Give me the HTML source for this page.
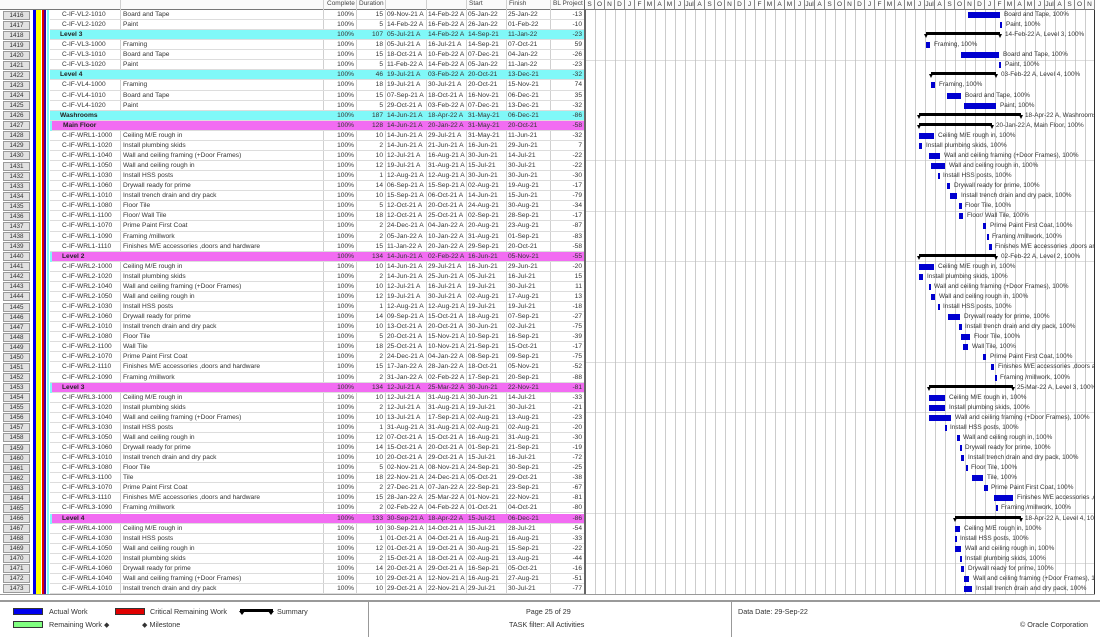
<!DOCTYPE html>
<html><head><meta charset="utf-8">
<style>
*{margin:0;padding:0;box-sizing:border-box}
body{width:1100px;height:635px;background:#fff;font-family:"Liberation Sans",sans-serif;color:#333;position:relative;overflow:hidden}
.hd{position:absolute;top:0;left:0;width:1095px;height:10px;border-bottom:1px solid #777;background:#fafafa}
.hd i{position:absolute;top:0;font-style:normal;font-size:6.5px;line-height:8px;color:#444}
.mo{position:absolute;left:585px;top:0;height:10px;display:flex}
.mo span{width:10px;height:10px;border-right:1px solid #888;font-size:6.5px;line-height:10px;text-align:center;color:#333;overflow:hidden}
.grid{position:absolute;left:585px;top:10px;width:510px;height:585px;
background:repeating-linear-gradient(to bottom,transparent 0 50px,#bbb 50px 50.35px),repeating-linear-gradient(to right,transparent 0 9px,#ccc 9px 10px);border-right:1px solid #333;border-left:1px solid #666}
.vl{position:absolute;top:0;width:1px;height:595px;background:#d0d0d0}
.stripes{position:absolute;top:10px;left:33px;height:585px;width:17px;
background:linear-gradient(to right,#0000ee 0 3px,#ffff00 3px 8px,#fff 8px 9px,#e00000 9px 11px,#4000a0 11px 13px,#fff 13px 14px,#80f8f8 14px 16px,#fff 16px)}
.r{position:absolute;left:0;width:1095px;height:10.07px;top:calc(10px + var(--i)*10.07px);overflow:hidden}
.r i{position:absolute;top:0;font-style:normal;font-size:6.6px;line-height:10px;white-space:nowrap}
.r .id{left:3px;width:27px;height:9px;top:.5px;background:#e2e2e2;border:1px solid #9a9a9a;text-align:center;line-height:8px;font-size:6.3px}
.r .bg{left:50px;width:534px;height:10.07px;border-bottom:1px solid #ddd}
.cy .bg{background:#80f8f8}
.mg .bg{background:#f26cf2;left:52px;width:532px}
.mg::before{content:"";position:absolute;left:50px;top:0;width:2px;height:10px;background:#80f8f8}
.r .a{left:62px}
.cy .a,.mg .a{font-weight:bold;color:#222}
.cy .a{left:60px}
.r .n{left:123px}
.r .c{left:323px;width:31px;text-align:right}
.r .d{left:356px;width:27px;text-align:right}
.r .s1{left:387px}.r .f1{left:428px}.r .s2{left:468px}.r .f2{left:508px}
.r .bl{left:550px;width:32px;text-align:right}
.b{position:absolute;top:2px;height:6px;background:#0000d0}
.s{position:absolute;top:2px;height:3px;background:#000}
.s::before,.s::after{content:"";position:absolute;top:2px;border-top:4px solid #000;border-left:2.5px solid transparent;border-right:2.5px solid transparent}
.s::before{left:-2px}.s::after{right:-2px}
.r .l{font-size:6.4px;color:#333}
.ft{position:absolute;left:0;top:600px;width:1100px;height:35px;border-top:2px solid #999}
.ft .dv{position:absolute;top:0;width:1px;height:35px;background:#999}
.ft span{position:absolute;font-size:7.2px;color:#333;white-space:nowrap}
.bx{position:absolute;width:30px;height:7px;border:1px solid #333}
</style></head><body>
<div class="hd">
<i style="left:327px">Complete</i><i style="left:359px">Duration</i><i style="left:469px">Start</i><i style="left:509px">Finish</i><i style="left:553px">BL Project</i>
</div>
<div class="mo"><span>S</span><span>O</span><span>N</span><span>D</span><span>J</span><span>F</span><span>M</span><span>A</span><span>M</span><span>J</span><span>Jul</span><span>A</span><span>S</span><span>O</span><span>N</span><span>D</span><span>J</span><span>F</span><span>M</span><span>A</span><span>M</span><span>J</span><span>Jul</span><span>A</span><span>S</span><span>O</span><span>N</span><span>D</span><span>J</span><span>F</span><span>M</span><span>A</span><span>M</span><span>J</span><span>Jul</span><span>A</span><span>S</span><span>O</span><span>N</span><span>D</span><span>J</span><span>F</span><span>M</span><span>A</span><span>M</span><span>J</span><span>Jul</span><span>A</span><span>S</span><span>O</span><span>N</span></div>
<div class="grid"></div>
<div class="vl" style="left:120px"></div><div class="vl" style="left:323px"></div><div class="vl" style="left:356px"></div><div class="vl" style="left:385px"></div><div class="vl" style="left:426px"></div><div class="vl" style="left:466px"></div><div class="vl" style="left:506px"></div><div class="vl" style="left:550px"></div><div class="vl" style="left:584px;background:#666"></div>
<div class="stripes"></div>

<div class="r" style="--i:0"><i class="id">1416</i><i class="bg"></i><i class="a">C-IF-VL2-1010</i><i class="n">Board and Tape</i><i class="c">100%</i><i class="d">15</i><i class="s1">09-Nov-21 A</i><i class="f1">14-Feb-22 A</i><i class="s2">05-Jan-22</i><i class="f2">25-Jan-22</i><i class="bl">-13</i><b class="b" style="left:968px;width:32px"></b><i class="l" style="left:1004px">Board and Tape, 100%</i></div>
<div class="r" style="--i:1"><i class="id">1417</i><i class="bg"></i><i class="a">C-IF-VL2-1020</i><i class="n">Paint</i><i class="c">100%</i><i class="d">5</i><i class="s1">14-Feb-22 A</i><i class="f1">16-Feb-22 A</i><i class="s2">26-Jan-22</i><i class="f2">01-Feb-22</i><i class="bl">-10</i><b class="b" style="left:1000px;width:2px"></b><i class="l" style="left:1006px">Paint, 100%</i></div>
<div class="r cy" style="--i:2"><i class="id">1418</i><i class="bg"></i><i class="a">Level 3</i><i class="c">100%</i><i class="d">107</i><i class="s1">05-Jul-21 A</i><i class="f1">14-Feb-22 A</i><i class="s2">14-Sep-21</i><i class="f2">11-Jan-22</i><i class="bl">-23</i><b class="s" style="left:926px;width:74px"></b><i class="l" style="left:1005px">14-Feb-22 A, Level 3, 100%</i></div>
<div class="r" style="--i:3"><i class="id">1419</i><i class="bg"></i><i class="a">C-IF-VL3-1000</i><i class="n">Framing</i><i class="c">100%</i><i class="d">18</i><i class="s1">05-Jul-21 A</i><i class="f1">16-Jul-21 A</i><i class="s2">14-Sep-21</i><i class="f2">07-Oct-21</i><i class="bl">59</i><b class="b" style="left:926px;width:4px"></b><i class="l" style="left:934px">Framing, 100%</i></div>
<div class="r" style="--i:4"><i class="id">1420</i><i class="bg"></i><i class="a">C-IF-VL3-1010</i><i class="n">Board and Tape</i><i class="c">100%</i><i class="d">15</i><i class="s1">18-Oct-21 A</i><i class="f1">10-Feb-22 A</i><i class="s2">07-Dec-21</i><i class="f2">04-Jan-22</i><i class="bl">-26</i><b class="b" style="left:961px;width:38px"></b><i class="l" style="left:1003px">Board and Tape, 100%</i></div>
<div class="r" style="--i:5"><i class="id">1421</i><i class="bg"></i><i class="a">C-IF-VL3-1020</i><i class="n">Paint</i><i class="c">100%</i><i class="d">5</i><i class="s1">11-Feb-22 A</i><i class="f1">14-Feb-22 A</i><i class="s2">05-Jan-22</i><i class="f2">11-Jan-22</i><i class="bl">-23</i><b class="b" style="left:999px;width:2px"></b><i class="l" style="left:1005px">Paint, 100%</i></div>
<div class="r cy" style="--i:6"><i class="id">1422</i><i class="bg"></i><i class="a">Level 4</i><i class="c">100%</i><i class="d">46</i><i class="s1">19-Jul-21 A</i><i class="f1">03-Feb-22 A</i><i class="s2">20-Oct-21</i><i class="f2">13-Dec-21</i><i class="bl">-32</i><b class="s" style="left:931px;width:65px"></b><i class="l" style="left:1001px">03-Feb-22 A, Level 4, 100%</i></div>
<div class="r" style="--i:7"><i class="id">1423</i><i class="bg"></i><i class="a">C-IF-VL4-1000</i><i class="n">Framing</i><i class="c">100%</i><i class="d">18</i><i class="s1">19-Jul-21 A</i><i class="f1">30-Jul-21 A</i><i class="s2">20-Oct-21</i><i class="f2">15-Nov-21</i><i class="bl">74</i><b class="b" style="left:931px;width:4px"></b><i class="l" style="left:939px">Framing, 100%</i></div>
<div class="r" style="--i:8"><i class="id">1424</i><i class="bg"></i><i class="a">C-IF-VL4-1010</i><i class="n">Board and Tape</i><i class="c">100%</i><i class="d">15</i><i class="s1">07-Sep-21 A</i><i class="f1">18-Oct-21 A</i><i class="s2">16-Nov-21</i><i class="f2">06-Dec-21</i><i class="bl">35</i><b class="b" style="left:947px;width:14px"></b><i class="l" style="left:965px">Board and Tape, 100%</i></div>
<div class="r" style="--i:9"><i class="id">1425</i><i class="bg"></i><i class="a">C-IF-VL4-1020</i><i class="n">Paint</i><i class="c">100%</i><i class="d">5</i><i class="s1">29-Oct-21 A</i><i class="f1">03-Feb-22 A</i><i class="s2">07-Dec-21</i><i class="f2">13-Dec-21</i><i class="bl">-32</i><b class="b" style="left:964px;width:32px"></b><i class="l" style="left:1000px">Paint, 100%</i></div>
<div class="r cy" style="--i:10"><i class="id">1426</i><i class="bg"></i><i class="a">Washrooms</i><i class="c">100%</i><i class="d">187</i><i class="s1">14-Jun-21 A</i><i class="f1">18-Apr-22 A</i><i class="s2">31-May-21</i><i class="f2">06-Dec-21</i><i class="bl">-86</i><b class="s" style="left:919px;width:102px"></b><i class="l" style="left:1025px">18-Apr-22 A, Washrooms, 100%</i></div>
<div class="r mg" style="--i:11"><i class="id">1427</i><i class="bg"></i><i class="a" style="left:63px">Main Floor</i><i class="c">100%</i><i class="d">128</i><i class="s1">14-Jun-21 A</i><i class="f1">20-Jan-22 A</i><i class="s2">31-May-21</i><i class="f2">20-Oct-21</i><i class="bl">-58</i><b class="s" style="left:919px;width:73px"></b><i class="l" style="left:996px">20-Jan-22 A, Main Floor, 100%</i></div>
<div class="r" style="--i:12"><i class="id">1428</i><i class="bg"></i><i class="a">C-IF-WRL1-1000</i><i class="n">Ceiling M/E rough in</i><i class="c">100%</i><i class="d">10</i><i class="s1">14-Jun-21 A</i><i class="f1">29-Jul-21 A</i><i class="s2">31-May-21</i><i class="f2">11-Jun-21</i><i class="bl">-32</i><b class="b" style="left:919px;width:15px"></b><i class="l" style="left:938px">Ceiling M/E rough in, 100%</i></div>
<div class="r" style="--i:13"><i class="id">1429</i><i class="bg"></i><i class="a">C-IF-WRL1-1020</i><i class="n">Install plumbing skids</i><i class="c">100%</i><i class="d">2</i><i class="s1">14-Jun-21 A</i><i class="f1">21-Jun-21 A</i><i class="s2">16-Jun-21</i><i class="f2">29-Jun-21</i><i class="bl">7</i><b class="b" style="left:919px;width:3px"></b><i class="l" style="left:926px">Install plumbing skids, 100%</i></div>
<div class="r" style="--i:14"><i class="id">1430</i><i class="bg"></i><i class="a">C-IF-WRL1-1040</i><i class="n">Wall and ceiling framing (+Door Frames)</i><i class="c">100%</i><i class="d">10</i><i class="s1">12-Jul-21 A</i><i class="f1">16-Aug-21 A</i><i class="s2">30-Jun-21</i><i class="f2">14-Jul-21</i><i class="bl">-22</i><b class="b" style="left:929px;width:11px"></b><i class="l" style="left:944px">Wall and ceiling framing (+Door Frames), 100%</i></div>
<div class="r" style="--i:15"><i class="id">1431</i><i class="bg"></i><i class="a">C-IF-WRL1-1050</i><i class="n">Wall and ceiling rough in</i><i class="c">100%</i><i class="d">12</i><i class="s1">19-Jul-21 A</i><i class="f1">31-Aug-21 A</i><i class="s2">15-Jul-21</i><i class="f2">30-Jul-21</i><i class="bl">-22</i><b class="b" style="left:931px;width:14px"></b><i class="l" style="left:949px">Wall and ceiling rough in, 100%</i></div>
<div class="r" style="--i:16"><i class="id">1432</i><i class="bg"></i><i class="a">C-IF-WRL1-1030</i><i class="n">Install HSS posts</i><i class="c">100%</i><i class="d">1</i><i class="s1">12-Aug-21 A</i><i class="f1">12-Aug-21 A</i><i class="s2">30-Jun-21</i><i class="f2">30-Jun-21</i><i class="bl">-30</i><b class="b" style="left:938px;width:2px"></b><i class="l" style="left:943px">Install HSS posts, 100%</i></div>
<div class="r" style="--i:17"><i class="id">1433</i><i class="bg"></i><i class="a">C-IF-WRL1-1060</i><i class="n">Drywall ready for prime</i><i class="c">100%</i><i class="d">14</i><i class="s1">06-Sep-21 A</i><i class="f1">15-Sep-21 A</i><i class="s2">02-Aug-21</i><i class="f2">19-Aug-21</i><i class="bl">-17</i><b class="b" style="left:947px;width:3px"></b><i class="l" style="left:954px">Drywall ready for prime, 100%</i></div>
<div class="r" style="--i:18"><i class="id">1434</i><i class="bg"></i><i class="a">C-IF-WRL1-1010</i><i class="n">Install trench drain and dry pack</i><i class="c">100%</i><i class="d">10</i><i class="s1">15-Sep-21 A</i><i class="f1">06-Oct-21 A</i><i class="s2">14-Jun-21</i><i class="f2">15-Jun-21</i><i class="bl">-79</i><b class="b" style="left:950px;width:7px"></b><i class="l" style="left:961px">Install trench drain and dry pack, 100%</i></div>
<div class="r" style="--i:19"><i class="id">1435</i><i class="bg"></i><i class="a">C-IF-WRL1-1080</i><i class="n">Floor Tile</i><i class="c">100%</i><i class="d">5</i><i class="s1">12-Oct-21 A</i><i class="f1">20-Oct-21 A</i><i class="s2">24-Aug-21</i><i class="f2">30-Aug-21</i><i class="bl">-34</i><b class="b" style="left:959px;width:3px"></b><i class="l" style="left:965px">Floor Tile, 100%</i></div>
<div class="r" style="--i:20"><i class="id">1436</i><i class="bg"></i><i class="a">C-IF-WRL1-1100</i><i class="n">Floor/ Wall Tile</i><i class="c">100%</i><i class="d">18</i><i class="s1">12-Oct-21 A</i><i class="f1">25-Oct-21 A</i><i class="s2">02-Sep-21</i><i class="f2">28-Sep-21</i><i class="bl">-17</i><b class="b" style="left:959px;width:4px"></b><i class="l" style="left:967px">Floor/ Wall Tile, 100%</i></div>
<div class="r" style="--i:21"><i class="id">1437</i><i class="bg"></i><i class="a">C-IF-WRL1-1070</i><i class="n">Prime Paint First Coat</i><i class="c">100%</i><i class="d">2</i><i class="s1">24-Dec-21 A</i><i class="f1">04-Jan-22 A</i><i class="s2">20-Aug-21</i><i class="f2">23-Aug-21</i><i class="bl">-87</i><b class="b" style="left:983px;width:3px"></b><i class="l" style="left:990px">Prime Paint First Coat, 100%</i></div>
<div class="r" style="--i:22"><i class="id">1438</i><i class="bg"></i><i class="a">C-IF-WRL1-1090</i><i class="n">Framing /millwork</i><i class="c">100%</i><i class="d">2</i><i class="s1">05-Jan-22 A</i><i class="f1">10-Jan-22 A</i><i class="s2">31-Aug-21</i><i class="f2">01-Sep-21</i><i class="bl">-83</i><b class="b" style="left:987px;width:2px"></b><i class="l" style="left:992px">Framing /millwork, 100%</i></div>
<div class="r" style="--i:23"><i class="id">1439</i><i class="bg"></i><i class="a">C-IF-WRL1-1110</i><i class="n">Finishes M/E accessories ,doors and hardware</i><i class="c">100%</i><i class="d">15</i><i class="s1">11-Jan-22 A</i><i class="f1">20-Jan-22 A</i><i class="s2">29-Sep-21</i><i class="f2">20-Oct-21</i><i class="bl">-58</i><b class="b" style="left:989px;width:3px"></b><i class="l" style="left:995px">Finishes M/E accessories ,doors and hardware, 100%</i></div>
<div class="r mg" style="--i:24"><i class="id">1440</i><i class="bg"></i><i class="a">Level 2</i><i class="c">100%</i><i class="d">134</i><i class="s1">14-Jun-21 A</i><i class="f1">02-Feb-22 A</i><i class="s2">16-Jun-21</i><i class="f2">05-Nov-21</i><i class="bl">-55</i><b class="s" style="left:919px;width:77px"></b><i class="l" style="left:1001px">02-Feb-22 A, Level 2, 100%</i></div>
<div class="r" style="--i:25"><i class="id">1441</i><i class="bg"></i><i class="a">C-IF-WRL2-1000</i><i class="n">Ceiling M/E rough in</i><i class="c">100%</i><i class="d">10</i><i class="s1">14-Jun-21 A</i><i class="f1">29-Jul-21 A</i><i class="s2">16-Jun-21</i><i class="f2">29-Jun-21</i><i class="bl">-20</i><b class="b" style="left:919px;width:15px"></b><i class="l" style="left:938px">Ceiling M/E rough in, 100%</i></div>
<div class="r" style="--i:26"><i class="id">1442</i><i class="bg"></i><i class="a">C-IF-WRL2-1020</i><i class="n">Install plumbing skids</i><i class="c">100%</i><i class="d">2</i><i class="s1">14-Jun-21 A</i><i class="f1">25-Jun-21 A</i><i class="s2">05-Jul-21</i><i class="f2">16-Jul-21</i><i class="bl">15</i><b class="b" style="left:919px;width:4px"></b><i class="l" style="left:927px">Install plumbing skids, 100%</i></div>
<div class="r" style="--i:27"><i class="id">1443</i><i class="bg"></i><i class="a">C-IF-WRL2-1040</i><i class="n">Wall and ceiling framing (+Door Frames)</i><i class="c">100%</i><i class="d">10</i><i class="s1">12-Jul-21 A</i><i class="f1">16-Jul-21 A</i><i class="s2">19-Jul-21</i><i class="f2">30-Jul-21</i><i class="bl">11</i><b class="b" style="left:929px;width:2px"></b><i class="l" style="left:934px">Wall and ceiling framing (+Door Frames), 100%</i></div>
<div class="r" style="--i:28"><i class="id">1444</i><i class="bg"></i><i class="a">C-IF-WRL2-1050</i><i class="n">Wall and ceiling rough in</i><i class="c">100%</i><i class="d">12</i><i class="s1">19-Jul-21 A</i><i class="f1">30-Jul-21 A</i><i class="s2">02-Aug-21</i><i class="f2">17-Aug-21</i><i class="bl">13</i><b class="b" style="left:931px;width:4px"></b><i class="l" style="left:939px">Wall and ceiling rough in, 100%</i></div>
<div class="r" style="--i:29"><i class="id">1445</i><i class="bg"></i><i class="a">C-IF-WRL2-1030</i><i class="n">Install HSS posts</i><i class="c">100%</i><i class="d">1</i><i class="s1">12-Aug-21 A</i><i class="f1">12-Aug-21 A</i><i class="s2">19-Jul-21</i><i class="f2">19-Jul-21</i><i class="bl">-18</i><b class="b" style="left:938px;width:2px"></b><i class="l" style="left:943px">Install HSS posts, 100%</i></div>
<div class="r" style="--i:30"><i class="id">1446</i><i class="bg"></i><i class="a">C-IF-WRL2-1060</i><i class="n">Drywall ready for prime</i><i class="c">100%</i><i class="d">14</i><i class="s1">09-Sep-21 A</i><i class="f1">15-Oct-21 A</i><i class="s2">18-Aug-21</i><i class="f2">07-Sep-21</i><i class="bl">-27</i><b class="b" style="left:948px;width:12px"></b><i class="l" style="left:964px">Drywall ready for prime, 100%</i></div>
<div class="r" style="--i:31"><i class="id">1447</i><i class="bg"></i><i class="a">C-IF-WRL2-1010</i><i class="n">Install trench drain and dry pack</i><i class="c">100%</i><i class="d">10</i><i class="s1">13-Oct-21 A</i><i class="f1">20-Oct-21 A</i><i class="s2">30-Jun-21</i><i class="f2">02-Jul-21</i><i class="bl">-75</i><b class="b" style="left:959px;width:3px"></b><i class="l" style="left:965px">Install trench drain and dry pack, 100%</i></div>
<div class="r" style="--i:32"><i class="id">1448</i><i class="bg"></i><i class="a">C-IF-WRL2-1080</i><i class="n">Floor Tile</i><i class="c">100%</i><i class="d">5</i><i class="s1">20-Oct-21 A</i><i class="f1">15-Nov-21 A</i><i class="s2">10-Sep-21</i><i class="f2">16-Sep-21</i><i class="bl">-39</i><b class="b" style="left:961px;width:9px"></b><i class="l" style="left:974px">Floor Tile, 100%</i></div>
<div class="r" style="--i:33"><i class="id">1449</i><i class="bg"></i><i class="a">C-IF-WRL2-1100</i><i class="n">Wall Tile</i><i class="c">100%</i><i class="d">18</i><i class="s1">25-Oct-21 A</i><i class="f1">10-Nov-21 A</i><i class="s2">21-Sep-21</i><i class="f2">15-Oct-21</i><i class="bl">-17</i><b class="b" style="left:963px;width:5px"></b><i class="l" style="left:972px">Wall Tile, 100%</i></div>
<div class="r" style="--i:34"><i class="id">1450</i><i class="bg"></i><i class="a">C-IF-WRL2-1070</i><i class="n">Prime Paint First Coat</i><i class="c">100%</i><i class="d">2</i><i class="s1">24-Dec-21 A</i><i class="f1">04-Jan-22 A</i><i class="s2">08-Sep-21</i><i class="f2">09-Sep-21</i><i class="bl">-75</i><b class="b" style="left:983px;width:3px"></b><i class="l" style="left:990px">Prime Paint First Coat, 100%</i></div>
<div class="r" style="--i:35"><i class="id">1451</i><i class="bg"></i><i class="a">C-IF-WRL2-1110</i><i class="n">Finishes M/E accessories ,doors and hardware</i><i class="c">100%</i><i class="d">15</i><i class="s1">17-Jan-22 A</i><i class="f1">28-Jan-22 A</i><i class="s2">18-Oct-21</i><i class="f2">05-Nov-21</i><i class="bl">-52</i><b class="b" style="left:991px;width:3px"></b><i class="l" style="left:998px">Finishes M/E accessories ,doors and hardware, 100%</i></div>
<div class="r" style="--i:36"><i class="id">1452</i><i class="bg"></i><i class="a">C-IF-WRL2-1090</i><i class="n">Framing /millwork</i><i class="c">100%</i><i class="d">2</i><i class="s1">31-Jan-22 A</i><i class="f1">02-Feb-22 A</i><i class="s2">17-Sep-21</i><i class="f2">20-Sep-21</i><i class="bl">-88</i><b class="b" style="left:995px;width:2px"></b><i class="l" style="left:1000px">Framing /millwork, 100%</i></div>
<div class="r mg" style="--i:37"><i class="id">1453</i><i class="bg"></i><i class="a">Level 3</i><i class="c">100%</i><i class="d">134</i><i class="s1">12-Jul-21 A</i><i class="f1">25-Mar-22 A</i><i class="s2">30-Jun-21</i><i class="f2">22-Nov-21</i><i class="bl">-81</i><b class="s" style="left:929px;width:84px"></b><i class="l" style="left:1017px">25-Mar-22 A, Level 3, 100%</i></div>
<div class="r" style="--i:38"><i class="id">1454</i><i class="bg"></i><i class="a">C-IF-WRL3-1000</i><i class="n">Ceiling M/E rough in</i><i class="c">100%</i><i class="d">10</i><i class="s1">12-Jul-21 A</i><i class="f1">31-Aug-21 A</i><i class="s2">30-Jun-21</i><i class="f2">14-Jul-21</i><i class="bl">-33</i><b class="b" style="left:929px;width:16px"></b><i class="l" style="left:949px">Ceiling M/E rough in, 100%</i></div>
<div class="r" style="--i:39"><i class="id">1455</i><i class="bg"></i><i class="a">C-IF-WRL3-1020</i><i class="n">Install plumbing skids</i><i class="c">100%</i><i class="d">2</i><i class="s1">12-Jul-21 A</i><i class="f1">31-Aug-21 A</i><i class="s2">19-Jul-21</i><i class="f2">30-Jul-21</i><i class="bl">-21</i><b class="b" style="left:929px;width:16px"></b><i class="l" style="left:949px">Install plumbing skids, 100%</i></div>
<div class="r" style="--i:40"><i class="id">1456</i><i class="bg"></i><i class="a">C-IF-WRL3-1040</i><i class="n">Wall and ceiling framing (+Door Frames)</i><i class="c">100%</i><i class="d">10</i><i class="s1">13-Jul-21 A</i><i class="f1">17-Sep-21 A</i><i class="s2">02-Aug-21</i><i class="f2">13-Aug-21</i><i class="bl">-23</i><b class="b" style="left:929px;width:22px"></b><i class="l" style="left:955px">Wall and ceiling framing (+Door Frames), 100%</i></div>
<div class="r" style="--i:41"><i class="id">1457</i><i class="bg"></i><i class="a">C-IF-WRL3-1030</i><i class="n">Install HSS posts</i><i class="c">100%</i><i class="d">1</i><i class="s1">31-Aug-21 A</i><i class="f1">31-Aug-21 A</i><i class="s2">02-Aug-21</i><i class="f2">02-Aug-21</i><i class="bl">-20</i><b class="b" style="left:945px;width:2px"></b><i class="l" style="left:950px">Install HSS posts, 100%</i></div>
<div class="r" style="--i:42"><i class="id">1458</i><i class="bg"></i><i class="a">C-IF-WRL3-1050</i><i class="n">Wall and ceiling rough in</i><i class="c">100%</i><i class="d">12</i><i class="s1">07-Oct-21 A</i><i class="f1">15-Oct-21 A</i><i class="s2">16-Aug-21</i><i class="f2">31-Aug-21</i><i class="bl">-30</i><b class="b" style="left:957px;width:3px"></b><i class="l" style="left:963px">Wall and ceiling rough in, 100%</i></div>
<div class="r" style="--i:43"><i class="id">1459</i><i class="bg"></i><i class="a">C-IF-WRL3-1060</i><i class="n">Drywall ready for prime</i><i class="c">100%</i><i class="d">14</i><i class="s1">15-Oct-21 A</i><i class="f1">20-Oct-21 A</i><i class="s2">01-Sep-21</i><i class="f2">21-Sep-21</i><i class="bl">-19</i><b class="b" style="left:960px;width:2px"></b><i class="l" style="left:965px">Drywall ready for prime, 100%</i></div>
<div class="r" style="--i:44"><i class="id">1460</i><i class="bg"></i><i class="a">C-IF-WRL3-1010</i><i class="n">Install trench drain and dry pack</i><i class="c">100%</i><i class="d">10</i><i class="s1">20-Oct-21 A</i><i class="f1">29-Oct-21 A</i><i class="s2">15-Jul-21</i><i class="f2">16-Jul-21</i><i class="bl">-72</i><b class="b" style="left:961px;width:3px"></b><i class="l" style="left:968px">Install trench drain and dry pack, 100%</i></div>
<div class="r" style="--i:45"><i class="id">1461</i><i class="bg"></i><i class="a">C-IF-WRL3-1080</i><i class="n">Floor Tile</i><i class="c">100%</i><i class="d">5</i><i class="s1">02-Nov-21 A</i><i class="f1">08-Nov-21 A</i><i class="s2">24-Sep-21</i><i class="f2">30-Sep-21</i><i class="bl">-25</i><b class="b" style="left:966px;width:2px"></b><i class="l" style="left:971px">Floor Tile, 100%</i></div>
<div class="r" style="--i:46"><i class="id">1462</i><i class="bg"></i><i class="a">C-IF-WRL3-1100</i><i class="n">Tile</i><i class="c">100%</i><i class="d">18</i><i class="s1">22-Nov-21 A</i><i class="f1">24-Dec-21 A</i><i class="s2">05-Oct-21</i><i class="f2">29-Oct-21</i><i class="bl">-38</i><b class="b" style="left:972px;width:11px"></b><i class="l" style="left:987px">Tile, 100%</i></div>
<div class="r" style="--i:47"><i class="id">1463</i><i class="bg"></i><i class="a">C-IF-WRL3-1070</i><i class="n">Prime Paint First Coat</i><i class="c">100%</i><i class="d">2</i><i class="s1">27-Dec-21 A</i><i class="f1">07-Jan-22 A</i><i class="s2">22-Sep-21</i><i class="f2">23-Sep-21</i><i class="bl">-67</i><b class="b" style="left:984px;width:4px"></b><i class="l" style="left:991px">Prime Paint First Coat, 100%</i></div>
<div class="r" style="--i:48"><i class="id">1464</i><i class="bg"></i><i class="a">C-IF-WRL3-1110</i><i class="n">Finishes M/E accessories ,doors and hardware</i><i class="c">100%</i><i class="d">15</i><i class="s1">28-Jan-22 A</i><i class="f1">25-Mar-22 A</i><i class="s2">01-Nov-21</i><i class="f2">22-Nov-21</i><i class="bl">-81</i><b class="b" style="left:994px;width:19px"></b><i class="l" style="left:1017px">Finishes M/E accessories ,doors and hardware, 100%</i></div>
<div class="r" style="--i:49"><i class="id">1465</i><i class="bg"></i><i class="a">C-IF-WRL3-1090</i><i class="n">Framing /millwork</i><i class="c">100%</i><i class="d">2</i><i class="s1">02-Feb-22 A</i><i class="f1">04-Feb-22 A</i><i class="s2">01-Oct-21</i><i class="f2">04-Oct-21</i><i class="bl">-80</i><b class="b" style="left:996px;width:2px"></b><i class="l" style="left:1001px">Framing /millwork, 100%</i></div>
<div class="r mg" style="--i:50"><i class="id">1466</i><i class="bg"></i><i class="a">Level 4</i><i class="c">100%</i><i class="d">133</i><i class="s1">30-Sep-21 A</i><i class="f1">18-Apr-22 A</i><i class="s2">15-Jul-21</i><i class="f2">06-Dec-21</i><i class="bl">-86</i><b class="s" style="left:955px;width:66px"></b><i class="l" style="left:1025px">18-Apr-22 A, Level 4, 100%</i></div>
<div class="r" style="--i:51"><i class="id">1467</i><i class="bg"></i><i class="a">C-IF-WRL4-1000</i><i class="n">Ceiling M/E rough in</i><i class="c">100%</i><i class="d">10</i><i class="s1">30-Sep-21 A</i><i class="f1">14-Oct-21 A</i><i class="s2">15-Jul-21</i><i class="f2">28-Jul-21</i><i class="bl">-54</i><b class="b" style="left:955px;width:5px"></b><i class="l" style="left:964px">Ceiling M/E rough in, 100%</i></div>
<div class="r" style="--i:52"><i class="id">1468</i><i class="bg"></i><i class="a">C-IF-WRL4-1030</i><i class="n">Install HSS posts</i><i class="c">100%</i><i class="d">1</i><i class="s1">01-Oct-21 A</i><i class="f1">04-Oct-21 A</i><i class="s2">16-Aug-21</i><i class="f2">16-Aug-21</i><i class="bl">-33</i><b class="b" style="left:955px;width:2px"></b><i class="l" style="left:960px">Install HSS posts, 100%</i></div>
<div class="r" style="--i:53"><i class="id">1469</i><i class="bg"></i><i class="a">C-IF-WRL4-1050</i><i class="n">Wall and ceiling rough in</i><i class="c">100%</i><i class="d">12</i><i class="s1">01-Oct-21 A</i><i class="f1">19-Oct-21 A</i><i class="s2">30-Aug-21</i><i class="f2">15-Sep-21</i><i class="bl">-22</i><b class="b" style="left:955px;width:6px"></b><i class="l" style="left:965px">Wall and ceiling rough in, 100%</i></div>
<div class="r" style="--i:54"><i class="id">1470</i><i class="bg"></i><i class="a">C-IF-WRL4-1020</i><i class="n">Install plumbing skids</i><i class="c">100%</i><i class="d">2</i><i class="s1">15-Oct-21 A</i><i class="f1">18-Oct-21 A</i><i class="s2">02-Aug-21</i><i class="f2">13-Aug-21</i><i class="bl">-44</i><b class="b" style="left:960px;width:2px"></b><i class="l" style="left:965px">Install plumbing skids, 100%</i></div>
<div class="r" style="--i:55"><i class="id">1471</i><i class="bg"></i><i class="a">C-IF-WRL4-1060</i><i class="n">Drywall ready for prime</i><i class="c">100%</i><i class="d">14</i><i class="s1">20-Oct-21 A</i><i class="f1">29-Oct-21 A</i><i class="s2">16-Sep-21</i><i class="f2">05-Oct-21</i><i class="bl">-16</i><b class="b" style="left:961px;width:3px"></b><i class="l" style="left:968px">Drywall ready for prime, 100%</i></div>
<div class="r" style="--i:56"><i class="id">1472</i><i class="bg"></i><i class="a">C-IF-WRL4-1040</i><i class="n">Wall and ceiling framing (+Door Frames)</i><i class="c">100%</i><i class="d">10</i><i class="s1">29-Oct-21 A</i><i class="f1">12-Nov-21 A</i><i class="s2">16-Aug-21</i><i class="f2">27-Aug-21</i><i class="bl">-51</i><b class="b" style="left:964px;width:5px"></b><i class="l" style="left:973px">Wall and ceiling framing (+Door Frames), 100%</i></div>
<div class="r" style="--i:57"><i class="id">1473</i><i class="bg"></i><i class="a">C-IF-WRL4-1010</i><i class="n">Install trench drain and dry pack</i><i class="c">100%</i><i class="d">10</i><i class="s1">29-Oct-21 A</i><i class="f1">22-Nov-21 A</i><i class="s2">29-Jul-21</i><i class="f2">30-Jul-21</i><i class="bl">-77</i><b class="b" style="left:964px;width:8px"></b><i class="l" style="left:976px">Install trench drain and dry pack, 100%</i></div>

<div style="position:absolute;left:0;top:594px;width:1095px;height:1px;background:#999"></div>
<div class="ft">
<div class="dv" style="left:368px"></div><div class="dv" style="left:731px"></div>
<div class="bx" style="left:13px;top:6px;background:#0000ee"></div><span style="left:49px;top:5px">Actual Work</span>
<div class="bx" style="left:115px;top:6px;background:#e00000"></div><span style="left:150px;top:5px">Critical Remaining Work</span>
<div style="position:absolute;left:240px;top:7px;width:33px;height:3px;background:#000"></div>
<div style="position:absolute;left:239px;top:9px;border-top:4px solid #000;border-left:3px solid transparent;border-right:3px solid transparent"></div>
<div style="position:absolute;left:268px;top:9px;border-top:4px solid #000;border-left:3px solid transparent;border-right:3px solid transparent"></div>
<span style="left:277px;top:5px">Summary</span>
<div class="bx" style="left:13px;top:19px;background:#80ff80"></div><span style="left:49px;top:18px">Remaining Work ◆</span>
<span style="left:142px;top:18px">◆ Milestone</span>
<span style="left:526px;top:5px">Page 25 of 29</span>
<span style="left:509px;top:18px">TASK filter: All Activities</span>
<span style="left:738px;top:5px">Data Date: 29-Sep-22</span>
<span style="right:12px;top:18px">© Oracle Corporation</span>
</div>
</body></html>
